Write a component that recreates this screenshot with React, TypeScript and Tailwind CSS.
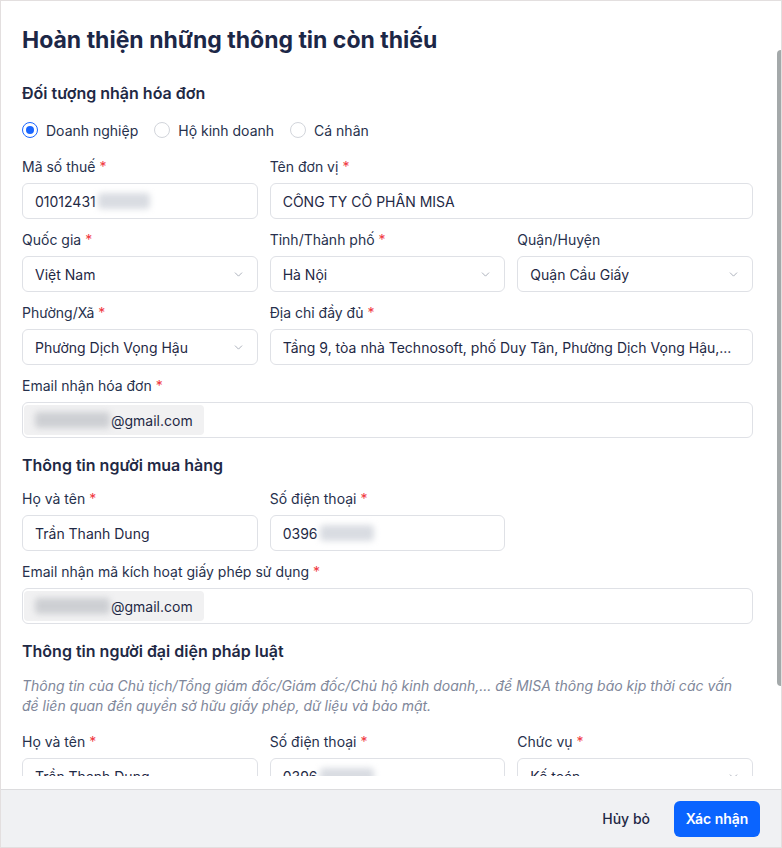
import React from 'react';
import { ChevronDown } from 'lucide-react';

const Label = ({ text, required }: { text: string; required?: boolean }) => (
  <div className="h-5 leading-5 text-[14px] text-[#27314d] mb-1.5 whitespace-nowrap">
    {text}
    {required && <span className="text-[#f0383e] ml-1">*</span>}
  </div>
);

const Box = ({ children, className = '' }: { children?: React.ReactNode; className?: string }) => (
  <div
    className={`h-9 border border-[#dfe1e6] rounded-md bg-white flex items-center text-[14px] text-[#1f2945] overflow-hidden ${className}`}
  >
    {children}
  </div>
);

const Blur = ({ w, className = '' }: { w: string; className?: string }) => (
  <span className={`inline-block h-[16px] ${w} blur-[3px] rounded-sm ${className}`} />
);

const TextField = ({
  label,
  value,
  required,
  span = '',
  blur,
}: {
  label: string;
  value: string;
  required?: boolean;
  span?: string;
  blur?: string;
}) => (
  <div className={span}>
    <Label text={label} required={required} />
    <Box className="px-3">
      <span className="truncate">{value}</span>
      {blur && <Blur w={blur} className="ml-0.5 bg-[#d9dce2]" />}
    </Box>
  </div>
);

const SelectField = ({ label, value, required }: { label: string; value: string; required?: boolean }) => (
  <div>
    <Label text={label} required={required} />
    <Box className="pl-3 pr-3 justify-between">
      <span className="truncate">{value}</span>
      <ChevronDown size={13} strokeWidth={1.5} className="text-[#9aa0ac] shrink-0" />
    </Box>
  </div>
);

const EmailField = ({ label }: { label: string }) => (
  <div className="col-span-3">
    <Label text={label} required />
    <Box className="px-[1px]">
      <div className="h-[30px] rounded bg-[#f1f1f2] flex items-center pl-[11px] pr-[11px]">
        <Blur w="w-[75px]" className="bg-[#cdcfd3]" />
        <span className="ml-[1px]">@gmail.com</span>
      </div>
    </Box>
  </div>
);

const Radio = ({ label, checked }: { label: string; checked?: boolean }) => (
  <label className="flex items-center gap-2 text-[14px] text-[#27314d]">
    <span
      className={`w-4 h-4 rounded-full border flex items-center justify-center bg-white ${
        checked ? 'border-[#1a66ff]' : 'border-[#d2d5db]'
      }`}
    >
      {checked && <span className="w-2 h-2 rounded-full bg-[#1a66ff]" />}
    </span>
    {label}
  </label>
);

const SectionTitle = ({ children, className = '' }: { children: React.ReactNode; className?: string }) => (
  <h2 className={`text-[16px] leading-6 font-semibold text-[#1f2945] ${className}`}>{children}</h2>
);

export default function App() {
  return (
    <div className="w-[782px] h-[848px] border border-[#e3dfdf] bg-white flex flex-col relative overflow-hidden font-['Inter',sans-serif]">
      <div className="flex-1 min-h-0 flex flex-col pb-[13px]">
        <div className="flex-1 min-h-0 overflow-hidden pl-[21px] pr-[28px] pt-6">
          <h1 className="text-[23px] leading-[30px] font-bold text-[#1c2747]">
            Hoàn thiện những thông tin còn thiếu
          </h1>

          <SectionTitle className="mt-[26px]">Đối tượng nhận hóa đơn</SectionTitle>
          <div className="mt-[15px] h-5 flex items-center gap-4">
            <Radio label="Doanh nghiệp" checked />
            <Radio label="Hộ kinh doanh" />
            <Radio label="Cá nhân" />
          </div>

          <div className="mt-[17px] grid grid-cols-3 gap-x-3 gap-y-[11px]">
            <TextField label="Mã số thuế" value="01012431" required blur="w-[52px]" />
            <TextField label="Tên đơn vị" value="CÔNG TY CÔ PHÂN MISA" required span="col-span-2" />
            <SelectField label="Quốc gia" value="Việt Nam" required />
            <SelectField label="Tỉnh/Thành phố" value="Hà Nội" required />
            <SelectField label="Quận/Huyện" value="Quận Cầu Giấy" />
            <SelectField label="Phường/Xã" value="Phường Dịch Vọng Hậu" required />
            <TextField
              label="Địa chỉ đầy đủ"
              value="Tầng 9, tòa nhà Technosoft, phố Duy Tân, Phường Dịch Vọng Hậu,..."
              required
              span="col-span-2"
            />
            <EmailField label="Email nhận hóa đơn" />
          </div>

          <SectionTitle className="mt-[15px]">Thông tin người mua hàng</SectionTitle>
          <div className="mt-3 grid grid-cols-3 gap-x-3 gap-y-[11px]">
            <TextField label="Họ và tên" value="Trần Thanh Dung" required />
            <TextField label="Số điện thoại" value="0396" required blur="w-[54px]" />
            <div />
            <EmailField label="Email nhận mã kích hoạt giấy phép sử dụng" />
          </div>

          <SectionTitle className="mt-[15px]">Thông tin người đại diện pháp luật</SectionTitle>
          <p className="mt-[13px] text-[14px] leading-5 italic text-[#80879a]">
            Thông tin của Chủ tịch/Tổng giám đốc/Giám đốc/Chủ hộ kinh doanh,... để MISA thông báo kịp thời các vấn
            <br />
            đề liên quan đến quyền sở hữu giấy phép, dữ liệu và bảo mật.
          </p>

          <div className="mt-4 grid grid-cols-3 gap-x-3">
            <TextField label="Họ và tên" value="Trần Thanh Dung" required />
            <TextField label="Số điện thoại" value="0396" required blur="w-[54px]" />
            <SelectField label="Chức vụ" value="Kế toán" required />
          </div>
        </div>
      </div>

      <div className="h-[58px] shrink-0 border-t border-[#dcdcde] bg-[#f0f1f3] flex items-center justify-end gap-2 pr-[21px]">
        <button className="h-9 px-4 text-[14px] font-medium text-[#1f2945]">Hủy bỏ</button>
        <button className="h-9 w-[86px] rounded-md bg-[#0a64ff] text-[14px] font-semibold text-white">
          Xác nhận
        </button>
      </div>

      <div className="absolute right-0 top-[49px] h-[636px] w-[4px] rounded-l-sm bg-[#a4a9aa]" />
    </div>
  );
}
